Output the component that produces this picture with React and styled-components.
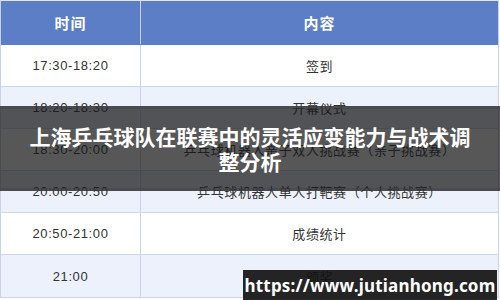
import React from "react";
import styled, { createGlobalStyle } from "styled-components";

const Global = createGlobalStyle`
  html, body { margin: 0; padding: 0; background: #ffffff; }
  body { width: 500px; height: 300px; overflow: hidden; font-family: "Liberation Sans", "Noto Sans CJK SC", sans-serif; }
`;

const Page = styled.div`
  position: relative;
  width: 500px;
  height: 300px;
  overflow: hidden;
`;

const Table = styled.div`
  width: 499px;
  border: 1px solid #c9d3e8;
  border-top-color: #dfe5f2;
  box-sizing: border-box;
  margin-top: 0;
`;

const Row = styled.div`
  display: grid;
  grid-template-columns: 140px 1fr;
  height: ${(p) => (p.$head ? 44 : 42)}px;
  background: ${(p) => (p.$head ? "#5b7ec7" : p.$alt ? "#edf1fb" : "#ffffff")};
  border-bottom: 1px solid ${(p) => (p.$head ? "#5b7ec7" : "#cdd6ea")};
  box-sizing: border-box;
  &:last-child { border-bottom: none; }
`;

const Cell = styled.div`
  display: flex;
  align-items: center;
  justify-content: center;
  border-right: ${(p) => (p.$first ? "1px solid #c9d3e8" : "none")};
  color: ${(p) => (p.$head ? "#ffffff" : "#333333")};
  font-weight: ${(p) => (p.$head ? 700 : 400)};
  font-size: ${(p) => (p.$head ? "15px" : "13px")};
  letter-spacing: ${(p) => (p.$head ? "1px" : "0.6px")};
  font-family: ${(p) =>
    p.$time ? '"Liberation Sans", Arial, sans-serif' : '"Noto Sans CJK SC", "Noto Sans", sans-serif'};
  white-space: nowrap;
`;

const Overlay = styled.div`
  position: absolute;
  left: 0;
  right: 0;
  top: 106px;
  height: 85px;
  background: rgba(22, 22, 24, 0.72);
  border-top: 3px solid rgba(70, 70, 72, 0.55);
  border-bottom: 3px solid rgba(70, 70, 72, 0.55);
  box-sizing: border-box;
  display: flex;
  align-items: center;
  justify-content: center;
`;

const Title = styled.h1`
  margin: 0;
  width: 460px;
  text-align: center;
  color: #ffffff;
  font-family: "Noto Sans CJK SC", "Noto Sans", sans-serif;
  font-weight: 700;
  font-size: 21px;
  line-height: 25px;
`;

const Watermark = styled.div`
  position: absolute;
  left: 243px;
  width: 254px;
  bottom: 0;
  height: 30px;
  background: rgba(18, 18, 18, 0.92);
  color: #ffffff;
  font-family: "Noto Sans", "DejaVu Sans", sans-serif;
  font-weight: 700;
  font-size: 17px;
  display: flex;
  align-items: center;
  justify-content: center;
  letter-spacing: 0.2px;
`;

const rows = [
  ["17:30-18:20", "签到"],
  ["18:20-18:30", "开幕仪式"],
  ["18:30-20:00", "乒乓球机器人亲子双人挑战赛（亲子挑战赛）"],
  ["20:00-20:50", "乒乓球机器人单人打靶赛（个人挑战赛）"],
  ["20:50-21:00", "成绩统计"],
  ["21:00", "颁奖"],
];

export default function App() {
  return (
    <Page>
      <Global />
      <Table>
        <Row $head>
          <Cell $head $first>时间</Cell>
          <Cell $head>内容</Cell>
        </Row>
        {rows.map(([t, c], i) => (
          <Row key={t} $alt={i % 2 === 1}>
            <Cell $first $time>{t}</Cell>
            <Cell>{c}</Cell>
          </Row>
        ))}
      </Table>
      <Overlay>
        <Title>上海乒乓球队在联赛中的灵活应变能力与战术调整分析</Title>
      </Overlay>
      <Watermark>https://www.jutianhong.com</Watermark>
    </Page>
  );
}
